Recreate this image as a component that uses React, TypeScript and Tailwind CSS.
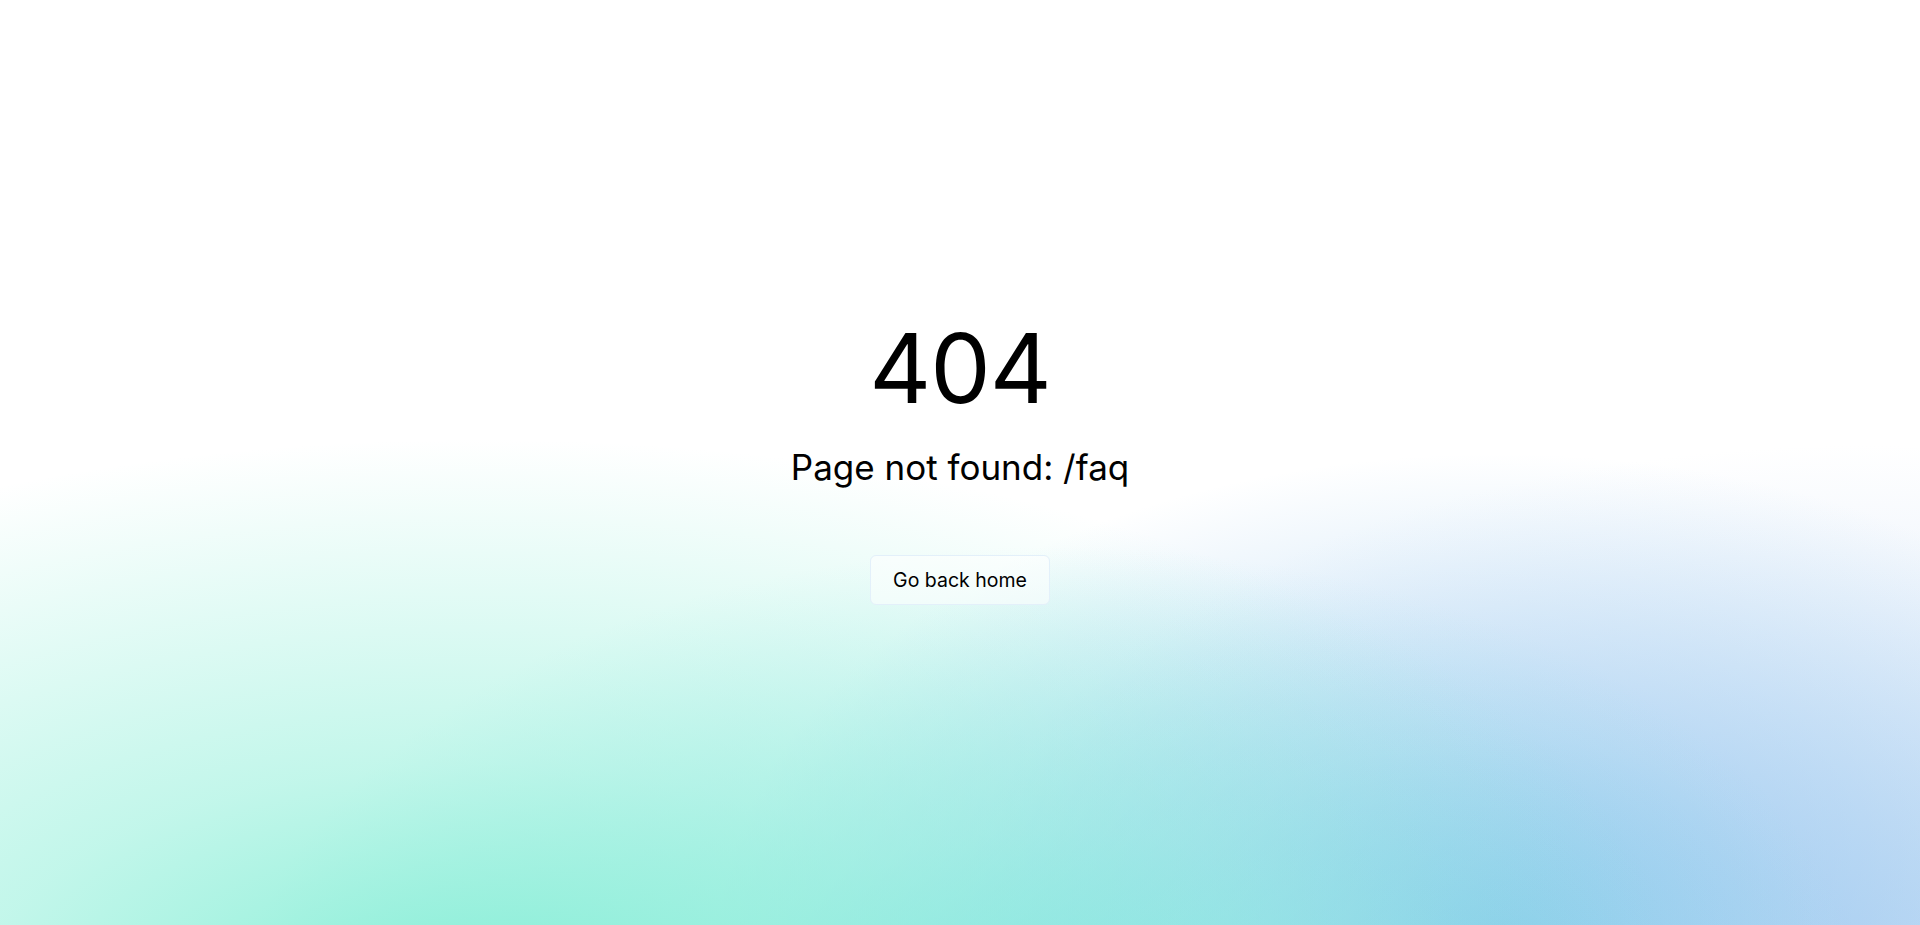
export default function App() {
  return (
    <div
      className="relative flex min-h-screen w-full flex-col items-center justify-center overflow-hidden bg-white font-['Inter','Noto_Sans',sans-serif] text-black"
    >
      {/* background blobs */}
      <div className="pointer-events-none absolute inset-0 bg-[radial-gradient(ellipse_1200px_560px_at_25%_108%,#86eed6_0%,rgba(134,238,214,0.5)_42%,rgba(134,238,214,0)_100%),radial-gradient(ellipse_820px_490px_at_55%_112%,#8ae3e6_0%,rgba(138,227,230,0.45)_42%,rgba(138,227,230,0)_100%),radial-gradient(ellipse_780px_490px_at_78%_102%,#8ec4ee_0%,rgba(142,196,238,0.5)_42%,rgba(142,196,238,0)_100%),radial-gradient(ellipse_900px_480px_at_97%_100%,rgba(200,220,245,0.9)_0%,rgba(200,220,245,0)_100%)]" />

      <div className="relative flex flex-col items-center">
        <h1 className="text-8xl leading-none font-normal tracking-[-0.01em]">404</h1>
        <p className="mt-[30px] text-[35px] leading-tight">Page not found: /faq</p>
        <a
          href="#"
          className="mt-[65px] rounded-md border border-[#e3f0fa] bg-[rgba(255,255,255,0.55)] px-[22px] py-[10px] text-[19.5px] leading-7"
        >
          Go back home
        </a>
      </div>
    </div>
  );
}
